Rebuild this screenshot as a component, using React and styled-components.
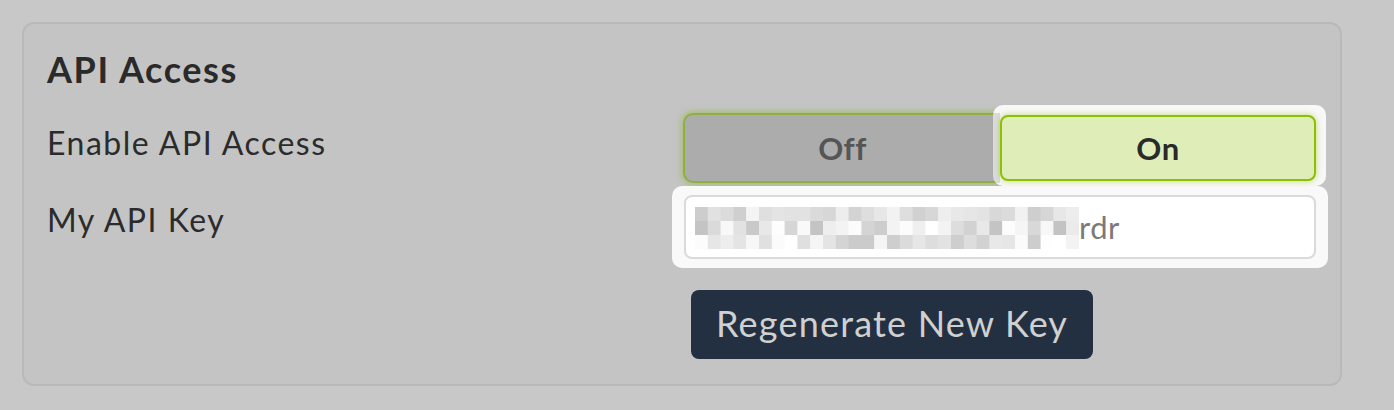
import React from "react";
import styled, { createGlobalStyle } from "styled-components";

const Global = createGlobalStyle`
  html, body { margin: 0; padding: 0; background: #c8c8c8; }
  body { font-family: "Lato", "Open Sans", sans-serif; }
  * { box-sizing: border-box; }
`;

const Page = styled.div`
  padding: 22px;
  min-height: 410px;
  background: #c8c8c8;
`;

const Card = styled.section`
  width: 1320px;
  height: 364px;
  border: 2px solid #b9b9b9;
  border-radius: 12px;
  background: #c4c4c4;
  padding: 23px 0 0 23px;
  display: flex;
  flex-direction: column;
`;

const Title = styled.h2`
  margin: 0;
  font-size: 36px;
  line-height: 44px;
  font-weight: 700;
  letter-spacing: 1.6px;
  color: #2a2a2a;
`;

const Row = styled.div`
  display: flex;
  align-items: flex-start;
  margin-top: ${(p) => p.$gap}px;
`;

const Label = styled.div`
  width: 625px;
  flex: none;
  font-size: 32px;
  line-height: 40px;
  letter-spacing: 1.5px;
  color: #2b2b2b;
  padding-top: ${(p) => p.$offset}px;
`;

const Control = styled.div`
  width: 656px;
  flex: none;
  display: flex;
`;

const Toggle = styled.div`
  margin-left: 11px;
  width: 633px;
  height: 70px;
  display: flex;
  border-radius: 10px;
  box-shadow: 0 0 6px 1px rgba(140, 180, 40, 0.6);
`;

const OffSeg = styled.div`
  flex: 1;
  background: #acacac;
  border: 2px solid #8fae44;
  border-right: none;
  border-radius: 10px 0 0 10px;
  display: flex;
  align-items: center;
  justify-content: center;
  font-size: 31px;
  font-weight: 700;
  letter-spacing: 0.5px;
  color: #555;
`;

const Spot = styled.div`
  background: linear-gradient(#dcdcdc, #dcdcdc) no-repeat 0 8px / 7px 70px, #f8f8f8;
  border-radius: 10px;
  display: flex;
  padding: ${(p) => p.$pad};
  margin: ${(p) => p.$margin || 0};
  width: ${(p) => p.$width}px;
  position: relative;
  z-index: 1;
`;

const OnSeg = styled.div`
  flex: 1;
  background: #dfeeb9;
  border: 2px solid #8cc000;
  border-radius: 8px;
  box-shadow: 0 0 6px rgba(140, 192, 0, 0.55);
  display: flex;
  align-items: center;
  justify-content: center;
  font-size: 31px;
  font-weight: 700;
  letter-spacing: 0.5px;
  color: #2a2a2a;
`;

const InputSpot = styled.div`
  width: 656px;
  height: 82px;
  padding: 9px 12px;
  background: #f9f9f9;
  border-radius: 10px;
`;

const Input = styled.div`
  height: 64px;
  background: #fff;
  border: 2px solid #dadada;
  border-radius: 8px;
  display: flex;
  align-items: center;
  padding-left: 9px;
  font-size: 31px;
  letter-spacing: 0.5px;
  color: #7a7a7a;
`;

const Mosaic = styled.svg`
  display: block;
  flex: none;
  margin-top: 2px;
`;

const Button = styled.button`
  margin-left: 19px;
  height: 69px;
  padding: 0 25px 4px;
  border: none;
  border-radius: 8px;
  background: #233042;
  color: #d0d0d0;
  font-family: inherit;
  font-size: 36px;
  font-weight: 400;
  letter-spacing: 1.2px;
  cursor: pointer;
`;

function mosaicCells() {
  let s = 11;
  const rnd = () => {
    s = (s * 16807) % 2147483647;
    return s / 2147483647;
  };
  const cells = [];
  const cols = 30;
  const w = 12.8;
  const rows = [
    { y: 0, h: 14, min: 205, max: 250 },
    { y: 14, h: 14, min: 195, max: 255 },
    { y: 28, h: 14, min: 200, max: 255 },
  ];
  rows.forEach((r) => {
    for (let i = 0; i < cols; i++) {
      const v = Math.round(r.min + rnd() * (r.max - r.min));
      cells.push({ x: i * w, y: r.y, w: w + 0.5, h: r.h, c: `rgb(${v},${v},${v})` });
    }
  });
  return cells;
}

const cells = mosaicCells();

export default function App() {
  return (
    <>
      <Global />
      <Page>
        <Card>
          <Title>API Access</Title>
          <Row $gap={22}>
            <Label $offset={10}>Enable API Access</Label>
            <Control>
              <Toggle>
                <OffSeg>Off</OffSeg>
                <Spot $width={333} $pad="10px 10px 5px 7px" $margin="-8px -10px -3px -7px">
                  <OnSeg>On</OnSeg>
                </Spot>
              </Toggle>
            </Control>
          </Row>
          <Row $gap={3}>
            <Label $offset={14}>My API Key</Label>
            <Control>
              <InputSpot>
                <Input>
                  <Mosaic width="384" height="42" viewBox="0 0 384 42">
                    {cells.map((c, i) => (
                      <rect key={i} x={c.x} y={c.y} width={c.w} height={c.h} fill={c.c} />
                    ))}
                  </Mosaic>
                  <span>rdr</span>
                </Input>
              </InputSpot>
            </Control>
          </Row>
          <Row $gap={22}>
            <Label $offset={0} />
            <Control>
              <Button>Regenerate New Key</Button>
            </Control>
          </Row>
        </Card>
      </Page>
    </>
  );
}
